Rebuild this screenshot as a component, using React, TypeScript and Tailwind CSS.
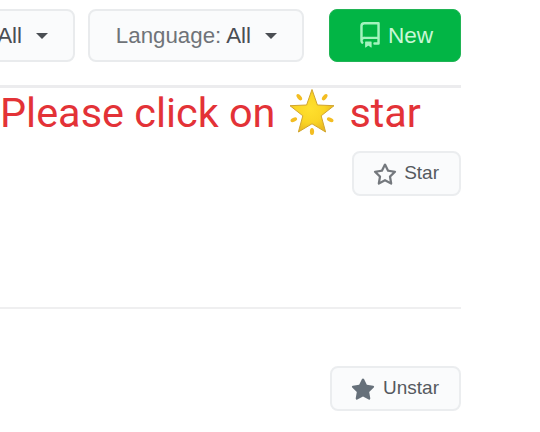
import type { ReactNode } from "react";

const STAR_OUTLINE =
  "M8 .25a.75.75 0 0 1 .673.418l1.882 3.815 4.21.612a.75.75 0 0 1 .416 1.279l-3.046 2.97.719 4.192a.751.751 0 0 1-1.088.791L8 12.347l-3.766 1.98a.75.75 0 0 1-1.088-.79l.72-4.194L.818 6.374a.75.75 0 0 1 .416-1.28l4.21-.611L7.327.668A.75.75 0 0 1 8 .25Zm0 2.445L6.615 5.5a.75.75 0 0 1-.564.41l-3.097.45 2.24 2.184a.75.75 0 0 1 .216.664l-.528 3.084 2.769-1.456a.75.75 0 0 1 .698 0l2.77 1.456-.53-3.084a.75.75 0 0 1 .216-.664l2.24-2.183-3.096-.45a.75.75 0 0 1-.564-.41L8 2.694Z";
const STAR_FILL =
  "M8 .25a.75.75 0 0 1 .673.418l1.882 3.815 4.21.612a.75.75 0 0 1 .416 1.279l-3.046 2.97.719 4.192a.751.751 0 0 1-1.088.791L8 12.347l-3.766 1.98a.75.75 0 0 1-1.088-.79l.72-4.194L.818 6.374a.75.75 0 0 1 .416-1.28l4.21-.611L7.327.668A.75.75 0 0 1 8 .25Z";
const REPO =
  "M2 2.5A2.5 2.5 0 0 1 4.5 0h8.75a.75.75 0 0 1 .75.75v12.5a.75.75 0 0 1-.75.75h-2.5a.75.75 0 0 1 0-1.5h1.75v-2h-8a1 1 0 0 0-.714 1.7.75.75 0 1 1-1.072 1.05A2.495 2.495 0 0 1 2 11.5Zm10.5-1h-8a1 1 0 0 0-1 1v6.708A2.486 2.486 0 0 1 4.5 9h8ZM5 12.25a.25.25 0 0 1 .25-.25h3.5a.25.25 0 0 1 .25.25v3.25a.25.25 0 0 1-.4.2l-1.45-1.087a.249.249 0 0 0-.3 0L5.4 15.7a.25.25 0 0 1-.4-.2Z";

function Icon({ d, className }: { d: string; className: string }) {
  return (
    <svg viewBox="0 0 16 16" fill="currentColor" className={`shrink-0 ${className}`}>
      <path d={d} />
    </svg>
  );
}

function Caret() {
  return (
    <svg viewBox="0 0 12 6" className="h-1.5 w-3 shrink-0 fill-[#4a4e53]">
      <path d="M0 0h12L6 6Z" />
    </svg>
  );
}

function FilterButton({ children, className }: { children: ReactNode; className: string }) {
  return (
    <button
      className={`flex h-[53px] shrink-0 items-center justify-end rounded-lg border-2 border-[#e9ebed] bg-[#fafbfc] text-[22.3px] whitespace-nowrap text-[#4a4e53] ${className}`}
    >
      {children}
    </button>
  );
}

function StarButton({ starred }: { starred?: boolean }) {
  return (
    <button
      className={`flex h-[45px] items-center rounded-lg border-2 border-[#ebedef] bg-[#fafbfc] pr-5 pl-[19px] text-[19px] text-[#55595e] ${starred ? "gap-2" : "gap-[7px]"}`}
    >
      <Icon
        d={starred ? STAR_FILL : STAR_OUTLINE}
        className={starred ? "mt-0.5 size-6 text-[#66707a]" : "mt-0.5 size-6 text-[#74787d]"}
      />
      <span>{starred ? "Unstar" : "Star"}</span>
    </button>
  );
}

function GlowingStar() {
  return (
    <svg viewBox="0 0 46 48" className="mr-3.5 ml-3.5 h-12 w-[46px] shrink-0">
      <defs>
        <radialGradient id="gold" cx="0.45" cy="0.45" r="0.55">
          <stop offset="0" stopColor="#ffe02e" />
          <stop offset="0.6" stopColor="#fad525" />
          <stop offset="1" stopColor="#e9b922" />
        </radialGradient>
      </defs>
      <path
        d="M23 1.5 28.4 17 45 17.7 32.2 27.8 36.6 44 23 35.8 9.4 44 13.8 27.8 1 17.7 17.6 17Z"
        fill="url(#gold)"
        stroke="#d2a52d"
        strokeWidth="1"
        strokeLinejoin="round"
      />
      <g fill="#f3bd22">
        <ellipse cx="10.3" cy="9.2" rx="2" ry="3.7" transform="rotate(-38 10.3 9.2)" />
        <ellipse cx="35.7" cy="9.2" rx="2" ry="3.7" transform="rotate(38 35.7 9.2)" />
        <ellipse cx="4.8" cy="31.7" rx="2" ry="3.5" transform="rotate(65 4.8 31.7)" />
        <ellipse cx="41.2" cy="31.7" rx="2" ry="3.5" transform="rotate(-65 41.2 31.7)" />
        <ellipse cx="23" cy="43.5" rx="2.1" ry="3.6" />
      </g>
    </svg>
  );
}

export default function App() {
  return (
    <main className="h-[432px] w-[540px] overflow-hidden bg-white font-['Liberation_Sans',Arial,sans-serif]">
      <div className="w-[461px]">
        <header className="flex h-[88px] items-start border-b-3 border-[#ececee] pt-[9px]">
          <FilterButton className="-ml-10 w-[115px] gap-3.5 pr-[25px]">
            <span>All</span>
            <Caret />
          </FilterButton>
          <FilterButton className="ml-[13px] w-[216px] gap-3.5 pr-[25px]">
            <span>
              <span className="text-[#6f7378]">Language:</span> All
            </span>
            <Caret />
          </FilterButton>
          <button className="ml-[25px] flex h-[53px] w-[132px] items-center justify-center gap-[5px] rounded-lg border border-[#20b455] bg-[#02b545] text-[22.6px] text-[#c8f7d5]">
            <Icon d={REPO} className="-mt-0.5 size-[26px] text-[#a4f3be]" />
            <span>New</span>
          </button>
        </header>
        <h1 className="flex h-[63px] items-start font-['Roboto',sans-serif] text-[41.4px] leading-[50px] whitespace-nowrap text-[#e33237]">
          <span>Please click on</span>
          <GlowingStar />
          <span>star</span>
        </h1>
        <section className="flex h-[158px] items-start justify-end border-b-2 border-[#efeff0]">
          <StarButton />
        </section>
        <section className="flex justify-end pt-[57px]">
          <StarButton starred />
        </section>
      </div>
    </main>
  );
}
